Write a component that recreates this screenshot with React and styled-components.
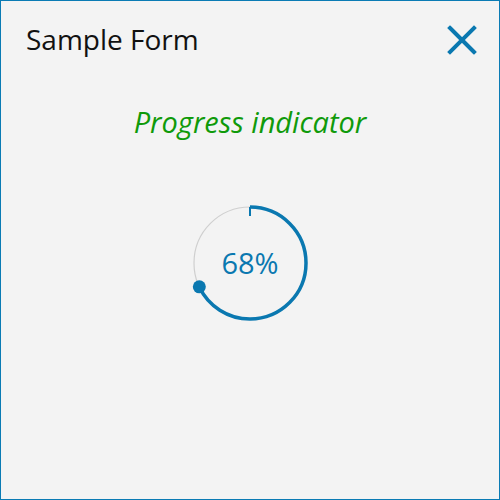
import React from "react";
import styled, { createGlobalStyle } from "styled-components";

const Global = createGlobalStyle`
  html, body { margin: 0; padding: 0; }
  body { width: 500px; height: 500px; overflow: hidden; }
`;

const Window = styled.div`
  box-sizing: border-box;
  width: 500px;
  height: 500px;
  border: 1px solid #0a7bb4;
  background: #f3f3f3;
  display: flex;
  flex-direction: column;
  font-family: "Open Sans", "Noto Sans", sans-serif;
`;

const Header = styled.div`
  display: flex;
  align-items: center;
  justify-content: space-between;
  height: 79px;
  padding: 0 21px 0 25px;
`;

const Title = styled.div`
  font-size: 28px;
  color: #111;
  margin-top: -3px;
`;

const CloseButton = styled.button`
  border: none;
  background: none;
  padding: 0;
  width: 32px;
  height: 32px;
  display: flex;
  align-items: center;
  justify-content: center;
  cursor: pointer;
  margin-top: -1px;
`;

const Body = styled.div`
  flex: 1;
  display: flex;
  flex-direction: column;
  align-items: center;
`;

const Heading = styled.div`
  font-size: 29px;
  line-height: 40px;
  font-style: italic;
  color: #0f9a0a;
  margin-top: 22px;
`;

const Ring = styled.div`
  position: relative;
  width: 120px;
  height: 120px;
  margin-top: 61px;
`;

const Percent = styled.div`
  position: absolute;
  inset: 0;
  display: flex;
  align-items: center;
  justify-content: center;
  font-size: 29px;
  color: #0a78b0;
  padding-bottom: 2px;
`;

function Progress({ value }) {
  const r = 56;
  const cx = 60, cy = 60;
  const c = 2 * Math.PI * r;
  const a = (value / 100) * 2 * Math.PI;
  const dx = cx + r * Math.sin(a);
  const dy = cy - r * Math.cos(a);
  return (
    <Ring>
      <svg width="120" height="120" viewBox="0 0 120 120">
        <circle cx={cx} cy={cy} r={r} fill="none" stroke="#cfcfcf" strokeWidth="1.2" />
        <circle
          cx={cx}
          cy={cy}
          r={r}
          fill="none"
          stroke="#0a78b0"
          strokeWidth="3.5"
          strokeDasharray={`${(value / 100) * c} ${c}`}
          transform={`rotate(-90 ${cx} ${cy})`}
        />
        <line x1={cx} y1={cy - r} x2={cx} y2={cy - r + 9} stroke="#0a78b0" strokeWidth="2" />
        <circle cx={dx} cy={dy} r="6.5" fill="#0a78b0" />
      </svg>
      <Percent>{value}%</Percent>
    </Ring>
  );
}

export default function App() {
  return (
    <>
      <Global />
      <Window>
        <Header>
          <Title>Sample Form</Title>
          <CloseButton aria-label="Close">
            <svg width="30" height="30" viewBox="0 0 30 30">
              <path d="M3 3 L27 27 M27 3 L3 27" stroke="#0a78b0" strokeWidth="4" strokeLinecap="square" />
            </svg>
          </CloseButton>
        </Header>
        <Body>
          <Heading>Progress indicator</Heading>
          <Progress value={68} />
        </Body>
      </Window>
    </>
  );
}
